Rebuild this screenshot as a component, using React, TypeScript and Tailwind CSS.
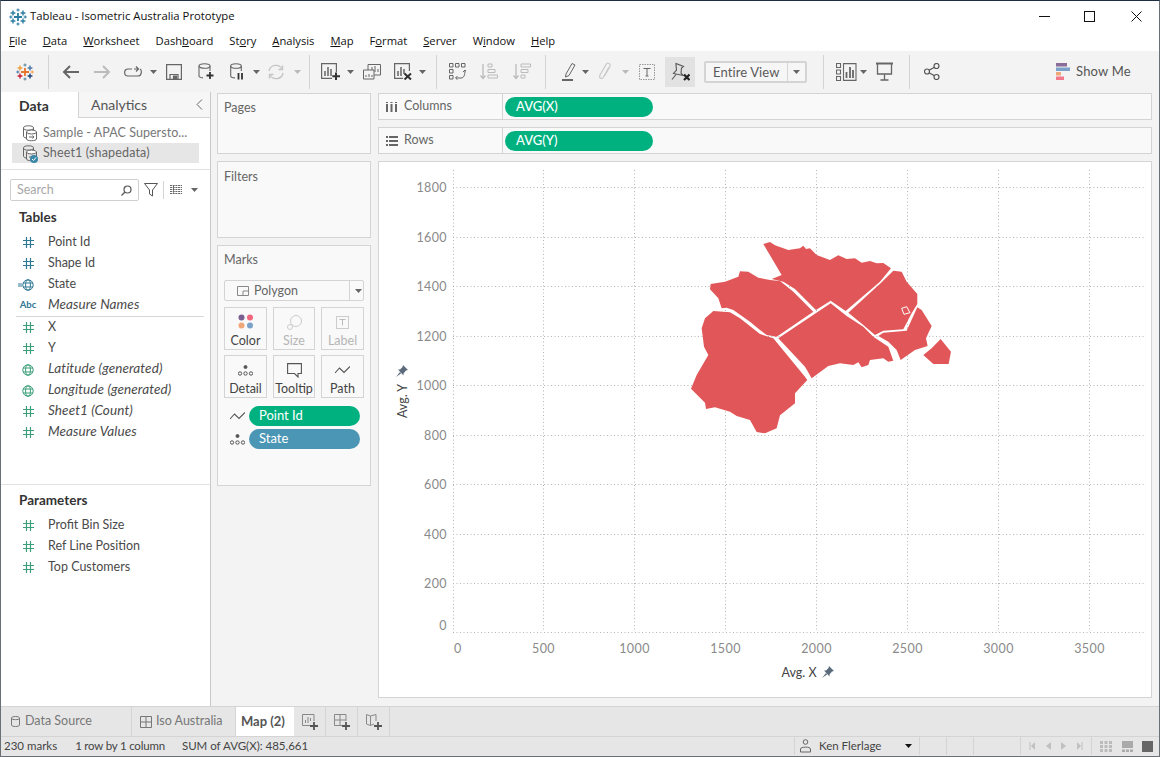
import React from 'react';

const Cross = ({ x, y, r, color, w = 1.4 }: { x: number; y: number; r: number; color: string; w?: number }) => (
  <path d={`M${x - r} ${y}H${x + r}M${x} ${y - r}V${y + r}`} stroke={color} strokeWidth={w} fill="none" />
);

const Logo = ({ c }: { c: string[] }) => (
  <svg width="18" height="18" viewBox="0 0 18 18">
    <Cross x={9} y={9} r={4} color={c[0]} w={1.8} />
    <Cross x={4} y={5} r={2.4} color={c[1]} />
    <Cross x={14} y={5} r={2.4} color={c[2]} />
    <Cross x={4} y={13} r={2.4} color={c[3]} />
    <Cross x={14} y={13} r={2.4} color={c[4]} />
    <Cross x={9} y={2} r={1.6} color={c[5]} w={1.1} />
    <Cross x={9} y={16} r={1.6} color={c[5]} w={1.1} />
    <Cross x={1.8} y={9} r={1.6} color={c[2]} w={1.1} />
    <Cross x={16.2} y={9} r={1.6} color={c[1]} w={1.1} />
  </svg>
);

const Caret = ({ className }: { className?: string }) => (
  <svg width="7" height="4" viewBox="0 0 7 4" className={className}>
    <path d="M0 0H7L3.5 4Z" fill="#666" />
  </svg>
);

const Sep = ({ className }: { className: string }) => <div className={`w-px h-[34px] bg-[#d4d4d4] ${className}`} />;

const Hash = ({ color }: { color: string }) => (
  <svg width="11" height="11" viewBox="0 0 11 11" fill="none" stroke={color} strokeWidth="1.2">
    <path d="M3.5 0V11M7.5 0V11M0 3.5H11M0 7.5H11" />
  </svg>
);

const Globe = ({ color }: { color: string }) => (
  <svg width="12" height="12" viewBox="0 0 12 12" fill="none" stroke={color} strokeWidth="1">
    <circle cx="6" cy="6" r="5.2" />
    <ellipse cx="6" cy="6" rx="2.4" ry="5.2" />
    <path d="M1 4H11M1 8H11" />
  </svg>
);

const DataIcon = () => (
  <svg width="16" height="17" viewBox="0 0 16 17" fill="none" stroke="#666" strokeWidth="1">
    <ellipse cx="6.5" cy="3" rx="5" ry="2.200" />
    <path d="M1.500 3V11C1.500 12 2.500 12.700 4 13M11.500 3V5" />
    <ellipse cx="9.500" cy="7" rx="5" ry="2" fill="#fff" />
    <path d="M4.500 7V14C4.500 16.300 14.500 16.300 14.500 14V7" />
    <path d="M7 12H12M10.500 10.500L12 12L10.500 13.500" />
  </svg>
);

const Field = ({ icon, label, italic }: { icon: React.ReactNode; label: string; italic?: boolean }) => (
  <div className="h-[21px] flex items-center">
    <div className="w-[47px] pl-[17px] pr-[10px] flex justify-center shrink-0">{icon}</div>
    <span className={`text-[#4a4a4a] leading-[16px] ${italic ? 'italic text-[13.500px] tracking-[0.1px] -mt-[4px]' : 'text-[12.500px] -mt-[2px]'}`}>{label}</span>
  </div>
);

const DIM = '#2f7893';
const MEA = '#3c9e7a';

const TitleBar = () => (
  <div className="h-[31px] bg-white flex items-center shrink-0">
    <div className="ml-[8px] mt-[1px]">
      <Logo c={['#2b7ea3', '#2b7ea3', '#2b7ea3', '#2b7ea3', '#2b7ea3', '#2b7ea3']} />
    </div>
    <span className="ml-[3px] font-['Open_Sans',sans-serif] text-[11.300px] text-[#111]">Tableau - Isometric Australia Prototype</span>
    <div className="ml-auto flex items-center mr-[17px]">
      <svg width="11" height="11" viewBox="0 0 11 11" className="mr-[34px]" stroke="#111" fill="none"><path d="M0 5.500H11" /></svg>
      <svg width="11" height="11" viewBox="0 0 11 11" className="mr-[36px]" stroke="#111" fill="none"><rect x=".5" y=".5" width="10" height="10" /></svg>
      <svg width="11" height="11" viewBox="0 0 11 11" stroke="#111" fill="none"><path d="M.5 .5L10.500 10.500M10.500 .5L.5 10.500" /></svg>
    </div>
  </div>
);

const MenuBar = () => (
  <div className="h-[19px] bg-white flex items-center gap-[16px] pl-[8px] font-['Open_Sans',sans-serif] text-[11.200px] text-[#111] shrink-0">
    <span><u>F</u>ile</span>
    <span><u>D</u>ata</span>
    <span><u>W</u>orksheet</span>
    <span>Dash<u>b</u>oard</span>
    <span>St<u>o</u>ry</span>
    <span><u>A</u>nalysis</span>
    <span><u>M</u>ap</span>
    <span>F<u>o</u>rmat</span>
    <span><u>S</u>erver</span>
    <span>W<u>i</u>ndow</span>
    <span><u>H</u>elp</span>
  </div>
);

const Toolbar = () => (
  <div className="h-[41px] bg-[#f3f3f3] flex items-center shrink-0">
    <div className="ml-[15px]"><Logo c={['#e8762b', '#f0a03c', '#4e79a7', '#c72037', '#1f447a', '#59879b']} /></div>
    <Sep className="ml-[14px]" />
    {/* back / forward */}
    <svg width="17" height="14" viewBox="0 0 17 14" className="ml-[13px]" fill="none" stroke="#666" strokeWidth="2"><path d="M17 7H2M8 1L2 7L8 13" /></svg>
    <svg width="17" height="14" viewBox="0 0 17 14" className="ml-[15px]" fill="none" stroke="#bbb" strokeWidth="2"><path d="M0 7H15M9 1L15 7L9 13" /></svg>
    <svg width="18" height="12" viewBox="0 0 18 12" className="ml-[13px]" fill="none" stroke="#666" strokeWidth="1.200"><path d="M8 3H4C-.5 3 -.5 10 4 10H14C18 10 18 4 16 3" /><path d="M10 3H14M12 .5L14.500 3L12 5.500" /></svg>
    <Caret className="ml-[8px]" />
    <svg width="16" height="16" viewBox="0 0 16 16" className="ml-[9px]" fill="none" stroke="#666" strokeWidth="1.200"><path d="M.6 .6H15.400V15.400H.6Z" /><path d="M4 15V10.500H12V15" /><path d="M7.500 12H10.500V15H7.500Z" fill="#666" /></svg>
    <svg width="16" height="17" viewBox="0 0 16 17" className="ml-[16px]" fill="none" stroke="#666" strokeWidth="1.100"><ellipse cx="6.500" cy="3" rx="5.500" ry="2.300" /><path d="M1 3V13C1 14 3 14.700 5 14.900M12 3V8" /><path d="M12 9V16M8.500 12.500H15.500" stroke="#333" strokeWidth="1.800" /></svg>
    <svg width="14" height="17" viewBox="0 0 14 17" className="ml-[16px]" fill="none" stroke="#666" strokeWidth="1.100"><ellipse cx="6" cy="3" rx="5.300" ry="2.300" /><path d="M.7 3V13C.7 14 2 14.700 5 14.900M11.300 3V8" /><path d="M8.500 10V16.500M12 10V16.500" stroke="#333" strokeWidth="1.800" /></svg>
    <Caret className="ml-[9px]" />
    <svg width="18" height="16" viewBox="0 0 18 16" className="ml-[7px]" fill="none" stroke="#c4c4c4" strokeWidth="1.300"><path d="M2 7A7 7 0 0 1 15 5M16 9A7 7 0 0 1 3 11" /><path d="M15.500 1.500V5.500H11.500M2.500 14.500V10.500H6.500" /></svg>
    <Caret className="ml-[9px] opacity-40" />
    <Sep className="ml-[8px]" />
    <svg width="20" height="17" viewBox="0 0 20 17" className="ml-[11px]" fill="none" stroke="#666" strokeWidth="1.200"><path d="M11 15.400H.6V.6H15.400V9" /><path d="M4 13V8M7 13V4M10 13V6" strokeWidth="1.500" /><path d="M15 9.500V17M11.300 13.200H19" stroke="#333" strokeWidth="2" /></svg>
    <Caret className="ml-[6px]" />
    <svg width="18" height="16" viewBox="0 0 18 16" className="ml-[9px]" fill="none" stroke="#666" strokeWidth="1"><path d="M5 6V.5H17.500V11H11" /><path d="M.5 6H11V15H.5Z" fill="#f3f3f3" /><path d="M9 6V3M12 8V2M15 8V5M3 13V11M6 13V10M9 13V11" /></svg>
    <svg width="18" height="17" viewBox="0 0 18 17" className="ml-[13px]" fill="none" stroke="#666" strokeWidth="1.200"><path d="M9 15.400H.6V.6H15.400V8" /><path d="M4 13V8M7 13V4M10 11V6" strokeWidth="1.500" /><path d="M10.500 10.500L17 16.500M17 10.500L10.500 16.500" stroke="#333" strokeWidth="2" /></svg>
    <Caret className="ml-[7px]" />
    <Sep className="ml-[10px]" />
    <svg width="17" height="17" viewBox="0 0 17 17" className="ml-[12px]" fill="none" stroke="#666" strokeWidth="1"><path d="M.5 .5H4V4H.5ZM6.500 .5H10V4H6.500ZM12.500 .5H16V4H12.500ZM.5 6.500H4V10H.5ZM.5 12.500H4V16H.5Z" /><path d="M7 15H12C15 15 16 12 16 7M14 9L16 7L17.500 9M8.500 13L6.500 15L8.500 16.800" /></svg>
    <svg width="18" height="17" viewBox="0 0 18 17" className="ml-[14px]" fill="none" stroke="#bbb" strokeWidth="1"><path d="M3 1V15M.5 12.500L3 15.500L5.500 12.500" strokeWidth="1.300" /><path d="M8 1H12V4H8ZM8 6.500H15V9.500H8ZM8 12H17.500V15H8Z" /></svg>
    <svg width="18" height="17" viewBox="0 0 18 17" className="ml-[15px]" fill="none" stroke="#bbb" strokeWidth="1"><path d="M3 1V15M.5 12.500L3 15.500L5.500 12.500" strokeWidth="1.300" /><path d="M8 1H17.500V4H8ZM8 6.500H15V9.500H8ZM8 12H12V15H8Z" /></svg>
    <Sep className="ml-[14px]" />
    {/* highlighter, clip, text */}
    <svg width="14" height="19" viewBox="0 0 14 19" className="ml-[16px]" fill="none" stroke="#666" strokeWidth="1"><path d="M4 12L10 1.500L13 3L7 13.500L3.500 15Z" /><path d="M0 18H11" strokeWidth="2" /></svg>
    <Caret className="ml-[6px]" />
    <svg width="13" height="19" viewBox="0 0 13 19" className="ml-[10px]" fill="none" stroke="#c9c9c9" strokeWidth="1.200"><path d="M10 5L4.500 15C3 18 -.5 16 1 13L7 2.500C8.500 0 12 1.500 11 4.500L5.500 14" /></svg>
    <Caret className="ml-[10px] opacity-40" />
    <svg width="16" height="16" viewBox="0 0 16 16" className="ml-[10px]" fill="none" stroke="#999" strokeWidth="1" strokeDasharray="1.500 1"><rect x=".5" y=".5" width="15" height="15" /><path d="M4.500 4.500H11.500M8 4.500V12M6.500 12H9.500" stroke="#666" strokeDasharray="none" /></svg>
    <div className="ml-[10px] w-[30px] h-[30px] bg-[#e2e2e2] flex items-center justify-center">
      <svg width="20" height="20" viewBox="0 0 20 20" fill="none" stroke="#555" strokeWidth="1.100"><path d="M6 1.500L13.500 4.500L11.500 6L11 11L13 13.500L3.500 11.500L6.500 8L6 3Z" /><path d="M6 12.500L2 17.500" /><path d="M14 12.500L19.500 18M19.500 12.500L14 18" stroke="#222" strokeWidth="2.200" /></svg>
    </div>
    <div className="ml-[9px] w-[103px] h-[22px] border-2 border-[#d4d4d4] rounded-[2px] flex items-center bg-[#f6f6f6]">
      <span className="w-[82px] pl-[7px] text-[13px] text-[#5a5a5a] border-r border-[#d4d4d4] leading-[18px] tracking-[0.1px]">Entire View</span>
      <Caret className="ml-[5px]" />
    </div>
    <Sep className="ml-[16px]" />
    <svg width="31" height="18" viewBox="0 0 31 18" className="ml-[12px]" fill="none" stroke="#666" strokeWidth="1.100"><path d="M.5 .5H4.500V4.500H.5ZM.5 7H4.500V11H.5ZM.5 13.500H4.500V17.500H.5Z" /><path d="M7.500 .6H20V17.400H7.500Z" /><path d="M10.500 15V9M14 15V4M17 15V7" strokeWidth="1.800" /></svg>
    <Caret className="-ml-[7px]" />
    <svg width="17" height="19" viewBox="0 0 17 19" className="ml-[9px]" fill="none" stroke="#666" strokeWidth="1.300"><path d="M0 1.500H17" strokeWidth="2" /><path d="M1.500 2V12H15.500V2M8.500 12V18M4.500 18H12.500" /></svg>
    <Sep className="ml-[16px]" />
    <svg width="16" height="17" viewBox="0 0 16 17" className="ml-[14px]" fill="none" stroke="#555" strokeWidth="1.200"><circle cx="3" cy="8.500" r="2.500" /><circle cx="12.500" cy="3" r="2.500" /><circle cx="12.500" cy="14" r="2.500" /><path d="M5 7.200L10.500 4.200M5 9.800L10.500 12.800" /></svg>
    <svg width="14" height="17" viewBox="0 0 14 17" className="ml-[116px]"><rect x="0" y="0" width="11" height="3.500" fill="#8a6d99" /><rect x="0" y="4.500" width="14" height="3.500" fill="#7ca2c9" /><rect x="0" y="9" width="5" height="3.500" fill="#f0a77a" /><rect x="0" y="13.500" width="8" height="3.500" fill="#f4788b" /></svg>
    <span className="ml-[6px] text-[13px] text-[#555] tracking-[0.2px]">Show Me</span>
  </div>
);

const DataPane = () => (
  <div className="w-[210px] bg-white border-r border-[#c8c8c8] shrink-0 flex flex-col">
    <div className="h-[26px] flex items-stretch text-[14px]">
      <div className="w-[78px] flex items-center pl-[18px] font-bold text-[#333] border-r border-[#d4d4d4]">Data</div>
      <div className="flex-1 flex items-center pl-[12px] text-[#555] bg-[#f6f6f6] border-b border-[#d4d4d4] mr-0">
        Analytics
        <svg width="7" height="11" viewBox="0 0 7 11" className="ml-auto mr-[7px]" fill="none" stroke="#666"><path d="M6 .5L1 5.500L6 10.500" /></svg>
      </div>
    </div>
    <div className="mt-[6px] h-[19px] flex items-center pl-[21px] text-[12.500px] text-[#777]">
      <DataIcon />
      <span className="ml-[5px] tracking-[0.05px]">Sample - APAC Supersto...</span>
    </div>
    <div className="h-[20px] ml-[11px] mr-[11px] bg-[#e6e6e6] flex items-center pl-[10px] text-[12.500px] text-[#666]">
      <div className="relative">
        <DataIcon />
        <svg width="8" height="8" viewBox="0 0 8 8" className="absolute right-[0px] -bottom-[1px]">
          <circle cx="4" cy="4" r="4" fill="#3b87a8" />
          <path d="M2 4L3.500 5.500L6 2.500" fill="none" stroke="#fff" strokeWidth="1" />
        </svg>
      </div>
      <span className="ml-[5px] tracking-[0.15px]">Sheet1 (shapedata)</span>
    </div>
    <div className="mt-[6px] border-t border-[#e2e2e2] h-[32px] flex items-end pl-[9px]">
      <div className="w-[129px] h-[22px] border border-[#d0d0d0] rounded-[2px] flex items-center px-[6px] text-[12.500px] text-[#a8a8a8]">
        Search
        <svg width="11" height="11" viewBox="0 0 11 11" className="ml-auto" fill="none" stroke="#555" strokeWidth="1.200"><circle cx="6.500" cy="4.500" r="3.500" /><path d="M4 7L.5 10.500" /></svg>
      </div>
      <svg width="14" height="14" viewBox="0 0 14 14" className="ml-[5px] mb-[4px]" fill="none" stroke="#555" strokeWidth="1"><path d="M.5 .5H13.500L8.500 7V13L5.500 11V7Z" /></svg>
      <div className="ml-[5px] w-px h-[18px] bg-[#d4d4d4] mb-[2px]" />
      <svg width="12" height="9" viewBox="0 0 12 9" className="ml-[6px] mb-[7px]" stroke="#666" fill="none"><path d="M0 .5H12M0 2.500H12M0 4.500H12M0 6.500H12M0 8.500H12M3.500 0V9M3.500 0V9" strokeDasharray="2 .7" /></svg>
      <Caret className="ml-[9px] mb-[9px]" />
    </div>
    <div className="mt-[7px] pl-[18px] h-[19px] text-[13.500px] font-bold text-[#333] flex items-center">Tables</div>
    <div className="mt-[5px]">
      <Field icon={<Hash color={DIM} />} label="Point Id" />
      <Field icon={<Hash color={DIM} />} label="Shape Id" />
      <Field
        icon={
          <div className="flex items-center -ml-[5px]">
            <svg width="4" height="4" viewBox="0 0 4 4" stroke={DIM}><path d="M0 1H4M0 3H4" /></svg>
            <Globe color={DIM} />
          </div>
        }
        label="State"
      />
      <Field icon={<span className="text-[9.500px] font-bold text-[#2f7893]">Abc</span>} label="Measure Names" italic />
      <div className="h-px bg-[#d8d8d8] ml-[15px] mr-[6px]" />
      <Field icon={<Hash color={MEA} />} label="X" />
      <Field icon={<Hash color={MEA} />} label="Y" />
      <Field icon={<Globe color={MEA} />} label="Latitude (generated)" italic />
      <Field icon={<Globe color={MEA} />} label="Longitude (generated)" italic />
      <Field icon={<Hash color={MEA} />} label="Sheet1 (Count)" italic />
      <Field icon={<Hash color={MEA} />} label="Measure Values" italic />
    </div>
    <div className="mt-[41px] border-t border-[#e2e2e2]" />
    <div className="mt-[6px] pl-[18px] h-[19px] text-[13.500px] font-bold text-[#333] flex items-center">Parameters</div>
    <div className="mt-[5px]">
      <Field icon={<Hash color={MEA} />} label="Profit Bin Size" />
      <Field icon={<Hash color={MEA} />} label="Ref Line Position" />
      <Field icon={<Hash color={MEA} />} label="Top Customers" />
    </div>
  </div>
);

const MarkButton = ({ icon, label, dim }: { icon: React.ReactNode; label: string; dim?: boolean }) => (
  <div className="h-[43px] border border-[#d4d4d4] flex flex-col items-center justify-end">
    <div className="h-[22px] flex items-center">{icon}</div>
    <span className={`text-[12.500px] leading-[16px] ${dim ? 'text-[#b5b5b5]' : 'text-[#444]'}`}>{label}</span>
  </div>
);

const DetailIcon = () => (
  <svg width="15" height="11" viewBox="0 0 15 11" fill="none" stroke="#555"><circle cx="7.500" cy="2" r="1.500" fill="#555" /><circle cx="2" cy="8.500" r="1.700" /><circle cx="7.500" cy="8.500" r="1.700" /><circle cx="13" cy="8.500" r="1.700" /></svg>
);

const PathIcon = () => (
  <svg width="15" height="9" viewBox="0 0 15 9" fill="none" stroke="#555" strokeWidth="1.100"><path d="M0 7L4.500 2L9 6.500L15 .5" /></svg>
);

const Pill = ({ label, className }: { label: string; className: string }) => (
  <div className={`h-[20px] rounded-full flex items-center text-white text-[13px] ${className}`}>{label}</div>
);

const MarksColumn = () => (
  <div className="w-[154px] flex flex-col gap-[7px] shrink-0">
    <div className="h-[61px] bg-[#f9f9f9] border border-[#d4d4d4] pl-[6px] pt-[5px] text-[12.500px] text-[#666]">Pages</div>
    <div className="h-[77px] bg-[#f9f9f9] border border-[#d4d4d4] pl-[6px] pt-[6px] text-[12.500px] text-[#666]">Filters</div>
    <div className="h-[241px] bg-[#f9f9f9] border border-[#d4d4d4] px-[6px] pt-[6px]">
      <div className="text-[12.500px] text-[#666] leading-[16px]">Marks</div>
      <div className="mt-[12px] h-[21px] border border-[#d4d4d4] rounded-[2px] flex items-center text-[12.500px] text-[#666]">
        <svg width="12" height="10" viewBox="0 0 12 10" className="ml-[12px]" fill="none" stroke="#888"><path d="M.5 .5H11.500V9.500H.5ZM6 9.500V5H11.500" /></svg>
        <span className="ml-[5px] w-[95px] pt-[1px]">Polygon</span>
        <div className="w-px h-[19px] bg-[#d4d4d4]" />
        <Caret className="ml-[5px]" />
      </div>
      <div className="mt-[6px] grid grid-cols-[43px_42px_43px] gap-x-[6px] gap-y-[5px] w-[140px]">
        <MarkButton
          label="Color"
          icon={
            <svg width="16" height="16" viewBox="0 0 16 16"><circle cx="3.500" cy="3.500" r="3" fill="#7b5f91" /><circle cx="12" cy="3.500" r="3" fill="#f3677e" /><circle cx="3.500" cy="11.500" r="3" fill="#f0a77a" /><circle cx="12" cy="11.500" r="3" fill="#7ca2c9" /></svg>
          }
        />
        <MarkButton
          label="Size"
          dim
          icon={
            <svg width="15" height="15" viewBox="0 0 15 15" fill="none" stroke="#ccc"><circle cx="9" cy="6" r="5.500" /><circle cx="3" cy="12" r="2.500" fill="#f9f9f9" /></svg>
          }
        />
        <MarkButton
          label="Label"
          dim
          icon={
            <svg width="13" height="13" viewBox="0 0 13 13" fill="none" stroke="#ccc"><rect x=".5" y=".5" width="12" height="12" /><path d="M3.500 3.500H9.500M6.500 3.500V9.500" stroke="#bbb" /></svg>
          }
        />
        <MarkButton label="Detail" icon={<DetailIcon />} />
        <MarkButton
          label="Tooltip"
          icon={
            <svg width="15" height="15" viewBox="0 0 15 15" fill="none" stroke="#555" strokeWidth="1.100"><path d="M.6 .6H14.400V10.500H11V14L7.500 10.500H.6Z" /></svg>
          }
        />
        <MarkButton label="Path" icon={<PathIcon />} />
      </div>
      <div className="mt-[8px] flex flex-col gap-[3px]">
        <div className="flex items-center">
          <div className="w-[25px] pl-[6px]"><PathIcon /></div>
          <Pill label="Point Id" className="w-[111px] pl-[10px] bg-[#00b180]" />
        </div>
        <div className="flex items-center">
          <div className="w-[25px] pl-[6px]"><DetailIcon /></div>
          <Pill label="State" className="w-[111px] pl-[10px] bg-[#4a96b4]" />
        </div>
      </div>
    </div>
  </div>
);

const Shelf = ({ icon, label, pill }: { icon: React.ReactNode; label: string; pill: string }) => (
  <div className="h-[27px] bg-[#f9f9f9] border border-[#d4d4d4] flex items-center">
    <div className="w-[124px] h-full flex items-center border-r border-[#d4d4d4] pl-[7px] text-[12.500px] text-[#666]">
      <div className="w-[18px]">{icon}</div>
      {label}
    </div>
    <Pill label={pill} className="ml-[2px] w-[148px] pl-[11px] bg-[#00b180] font-medium" />
  </div>
);

const xTicks = [
  { x: 543, t: '500' },
  { x: 634, t: '1000' },
  { x: 725, t: '1500' },
  { x: 816, t: '2000' },
  { x: 907, t: '2500' },
  { x: 998, t: '3000' },
  { x: 1089, t: '3500' },
];
const yTicks = [
  { y: 187.500, t: '1800' },
  { y: 237.500, t: '1600' },
  { y: 286.500, t: '1400' },
  { y: 336.500, t: '1200' },
  { y: 385.500, t: '1000' },
  { y: 435.500, t: '800' },
  { y: 484.500, t: '600' },
  { y: 534.500, t: '400' },
  { y: 583.500, t: '200' },
];

const pinPath = 'M829 666L834 671L832 671.500L829.500 674.500L829.500 676.500L824 670.500L826 670.500L828.500 668ZM826 673L822 678L827 674.500Z';

const Chart = () => (
  <div className="flex-1 bg-white border border-[#d4d4d4]">
    <svg viewBox="379 162 772 535" width="772" height="535" className="block">
      <g stroke="#b5b5b5" strokeDasharray="1 2.500" fill="none">
        {xTicks.map((d) => <path key={d.t} d={`M${d.x + 0.5} 170V632`} />)}
        {yTicks.map((d) => <path key={d.t} d={`M453 ${d.y}H1145`} />)}
        <path d="M453.500 170V632M453 632.500H1145" />
      </g>
      <g fill="#8a8a8a" fontSize="12.500" fontFamily="Lato, sans-serif" letterSpacing=".4">
        <text x="454" y="652.500">0</text>
        {xTicks.map((d) => <text key={d.t} x={d.x + 0.5} y={652.500} textAnchor="middle">{d.t}</text>)}
        <text x="447" y="629.500" textAnchor="end">0</text>
        {yTicks.map((d) => <text key={d.t} x={447} y={d.y + 4.500} textAnchor="end">{d.t}</text>)}
      </g>
      <g transform="translate(680 230) scale(.3333)" fill="#e15759">
        <path d="M250 42L270 36L285 46L325 60L360 55L370 47L378 57L390 55L410 75L450 90L475 76L500 87L525 85L545 98L570 93L590 100L610 99L633 115L600 155L497 243L452 212L408 240L345 177L310 155L275 147L305 135Z" />
        <path d="M92 162L135 155L175 140L180 124L205 125L235 143L270 150L300 153L340 185L400 245L290 320L260 315L240 300L210 275L160 240L140 233L125 235L115 205L90 178Z" />
        <path d="M100 243L150 247L180 265L240 312L280 325L375 440L382 450L345 490L345 520L300 556L290 595L255 610L230 606L210 570L170 558L150 545L105 532L78 537L75 518L33 476L50 435L85 375L72 350L65 295L75 265Z" />
        <path d="M452 220L500 258L550 290L580 320L625 350L640 392L625 395L610 385L570 390L565 405L545 412L535 397L520 405L480 400L445 408L395 445L375 410L295 325Z" />
        <path d="M640 122L665 125L680 155L712 192L712 222L695 250L670 298L610 302L585 315L550 285L505 248L605 157Z" />
        <path d="M712 232L725 240L755 288L738 325L743 348L705 360L662 390L650 360L625 335L595 318L610 308L680 302Z" />
        <path d="M782 327L813 365L806 402L760 402L730 375L755 355Z" />
        <path d="M665 235L680 230L690 248L672 253Z" fill="none" stroke="#fff" strokeWidth="3" />
      </g>
      <text x="799" y="677" textAnchor="middle" fill="#444" fontSize="12.500" fontFamily="Lato, sans-serif">Avg. X</text>
      <path d={pinPath} fill="#5b6b7b" />
      <text transform="translate(407 401) rotate(-90)" textAnchor="middle" fill="#444" fontSize="12.500" fontFamily="Lato, sans-serif">Avg. Y</text>
      <path d={pinPath} fill="#5b6b7b" transform="translate(-426 -301)" />
    </svg>
  </div>
);

const NewIcon = ({ children }: { children: React.ReactNode }) => (
  <div className="w-[32px] flex items-center justify-center border-r border-[#d4d4d4]">{children}</div>
);

const Plus = () => <path d="M12 8V16M8 12H16" stroke="#555" strokeWidth="1.800" />;

const Tabs = () => (
  <div className="h-[30px] bg-[#e6e6e6] border-t border-[#d4d4d4] flex items-stretch text-[12.500px] text-[#777] shrink-0">
    <div className="w-[131px] flex items-center pl-[10px] border-r border-[#d4d4d4]">
      <svg width="9" height="11" viewBox="0 0 9 11" fill="none" stroke="#777"><path d="M.5 2C.5 0 8.500 0 8.500 2V9C8.500 11 .5 11 .5 9ZM.5 2.500C.5 4 8.500 4 8.500 2.500" /></svg>
      <span className="ml-[5px]">Data Source</span>
    </div>
    <div className="w-[104px] flex items-center pl-[8px] border-r border-[#d4d4d4]">
      <svg width="12" height="12" viewBox="0 0 12 12" fill="none" stroke="#777"><path d="M.5 .5H11.500V11.500H.5ZM.5 6H11.500M6 .5V11.500" /></svg>
      <span className="ml-[4px]">Iso Australia</span>
    </div>
    <div className="w-[58px] bg-white flex items-center pl-[5px] font-bold text-[13px] text-[#555]">Map (2)</div>
    <NewIcon>
      <svg width="16" height="16" viewBox="0 0 16 16" fill="none" stroke="#888"><path d="M8 11.500H.5V.5H12V7" /><path d="M3.500 9V6M6 9V3M8.500 7V4" /><Plus /></svg>
    </NewIcon>
    <NewIcon>
      <svg width="16" height="16" viewBox="0 0 16 16" fill="none" stroke="#888"><path d="M8 11.500H.5V.5H12V7M.5 6H12M6 .5V11.500" /><Plus /></svg>
    </NewIcon>
    <NewIcon>
      <svg width="16" height="16" viewBox="0 0 16 16" fill="none" stroke="#888"><path d="M8 10L4.500 11.500L.5 10V.5L4.500 2L10 .5V7M4.500 2V11.500" /><Plus /></svg>
    </NewIcon>
  </div>
);

const StatusBar = () => (
  <div className="h-[20px] pb-[1px] bg-[#e6e6e6] border-t border-[#d4d4d4] flex items-stretch text-[11.500px] text-[#444] shrink-0">
    <span className="ml-[3px] self-center">230 marks</span>
    <span className="ml-[18px] self-center tracking-[-0.2px]">1 row by 1 column</span>
    <span className="ml-[17px] self-center">SUM of AVG(X): 485,661</span>
    <div className="ml-auto w-[126px] flex items-center border-x border-[#d4d4d4] pl-[5px]">
      <svg width="11" height="14" viewBox="0 0 11 14" fill="none" stroke="#666"><circle cx="5.500" cy="3" r="2.300" /><path d="M.5 13V10C.5 7.500 10.500 7.500 10.500 10V13Z" /></svg>
      <span className="ml-[8px] text-[#444]">Ken Flerlage</span>
      <svg width="7" height="4" viewBox="0 0 7 4" className="ml-auto mr-[7px]"><path d="M0 0H7L3.500 4Z" fill="#111" /></svg>
    </div>
    <div className="w-[27px] border-r border-[#d4d4d4]" />
    <div className="w-[27px] border-r border-[#d4d4d4]" />
    <div className="w-[47px] border-r border-[#d4d4d4]" />
    <div className="w-[71px] flex items-center justify-between px-[8px] border-r border-[#d4d4d4]">
      <svg width="6" height="8" viewBox="0 0 6 8" fill="#c0c0c0"><path d="M1 0V8" stroke="#c0c0c0" /><path d="M6 0V8L2 4Z" /></svg>
      <svg width="5" height="8" viewBox="0 0 5 8" fill="#c0c0c0"><path d="M5 0V8L0 4Z" /></svg>
      <svg width="5" height="8" viewBox="0 0 5 8" fill="#c0c0c0"><path d="M0 0V8L5 4Z" /></svg>
      <svg width="6" height="8" viewBox="0 0 6 8" fill="#c0c0c0"><path d="M0 0V8L4 4Z" /><path d="M5 0V8" stroke="#c0c0c0" /></svg>
    </div>
    <div className="w-[67px] flex items-center pl-[8px] pr-[6px] justify-between">
      <svg width="12" height="11" viewBox="0 0 12 11" fill="#bbb"><path d="M0 0H3V3H0ZM4.500 0H7.500V3H4.500ZM9 0H12V3H9ZM0 4H3V7H0ZM4.500 4H7.500V7H4.500ZM9 4H12V7H9ZM0 8H3V11H0ZM4.500 8H7.500V11H4.500ZM9 8H12V11H9Z" /></svg>
      <svg width="11" height="11" viewBox="0 0 11 11" fill="#aaa"><path d="M0 0H11V7H0ZM0 8.500H3V11H0ZM4 8.500H7V11H4ZM8 8.500H11V11H8Z" /></svg>
      <div className="w-[11px] h-[11px] bg-[#666]" />
    </div>
  </div>
);

export default function App() {
  return (
    <div className="w-[1160px] h-[757px] flex flex-col overflow-hidden border border-[#6b7076] border-t-[#1e2e42] font-[Lato,sans-serif]">
      <TitleBar />
      <MenuBar />
      <Toolbar />
      <div className="flex-1 flex min-h-0">
        <DataPane />
        <div className="flex-1 bg-[#f3f3f3] flex gap-[7px] pl-[6px] pr-[7px] pt-[1px]">
          <MarksColumn />
          <div className="flex-1 flex flex-col gap-[7px] pb-[8px]">
            <Shelf
              label="Columns"
              pill="AVG(X)"
              icon={<svg width="11" height="10" viewBox="0 0 11 10" fill="#666"><path d="M0 2H2V10H0ZM4.500 2H6.500V10H4.500ZM9 2H11V10H9ZM0 0H2V1H0ZM4.500 0H6.500V1H4.500ZM9 0H11V1H9Z" /></svg>}
            />
            <Shelf
              label="Rows"
              pill="AVG(Y)"
              icon={<svg width="12" height="10" viewBox="0 0 12 10" fill="#666"><path d="M3 0H12V2H3ZM3 4H12V6H3ZM3 8H12V10H3ZM0 0H2V2H0ZM0 4H2V6H0ZM0 8H2V10H0Z" /></svg>}
            />
            <Chart />
          </div>
        </div>
      </div>
      <Tabs />
      <StatusBar />
    </div>
  );
}
